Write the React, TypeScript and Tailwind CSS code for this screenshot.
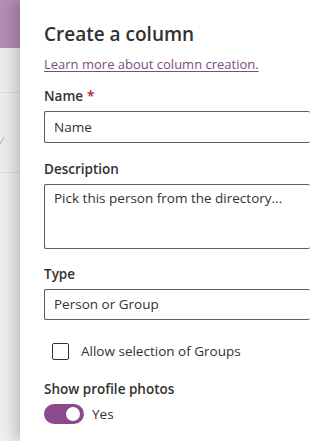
import { useState } from "react";

const font = { fontFamily: '"Open Sans", "Noto Sans", sans-serif' };

function Label({ children, required }: { children: React.ReactNode; required?: boolean }) {
  return (
    <div className="text-[13.5px] font-semibold leading-5 text-[#323130]">
      {children}
      {required && <span className="ml-1 text-[#a4262c]">*</span>}
    </div>
  );
}

export default function App() {
  const [groups, setGroups] = useState(false);
  const [photos, setPhotos] = useState(true);

  return (
    <div className="flex h-[441px] w-[310px] overflow-hidden bg-white" style={font}>
      {/* list behind the panel */}
      <div className="flex w-[20px] shrink-0 flex-col bg-[#ececec]">
        <div className="h-[48px] bg-[#b48cb4]" />
        <div className="h-[45px] border-b border-[#dcdcdc]" />
        <div className="h-[80px] border-b border-[#dcdcdc] pt-[42px] pl-[1px]">
          <span className="block text-[11px] leading-3 text-[#a0a0a0]">⁄</span>
        </div>
        <div className="flex-1 bg-[#eeeeee]" />
      </div>

      {/* side panel */}
      <div className="relative flex-1 pl-[24px] pt-[20px] shadow-[-6px_0_12px_rgba(0,0,0,0.18)]">
        <h1 className="text-[19px] font-semibold leading-7 text-[#323130]">Create a column</h1>
        <a
          href="#"
          className="mt-[6px] block text-[13px] leading-5 text-[#7d4c80] underline underline-offset-2"
        >
          Learn more about column creation.
        </a>

        <div className="mt-[12px]">
          <Label required>Name</Label>
          <div className="mt-[5px] flex h-[32px] items-center rounded-[2px] border border-r-0 border-[#605e5c] pl-[9px] text-[13.5px] text-[#323130]">
            Name
          </div>
        </div>

        <div className="mt-[16px]">
          <Label>Description</Label>
          <div className="mt-[5px] h-[65px] rounded-[2px] border border-r-0 border-[#605e5c] pl-[9px] pt-[3px] text-[13.5px] text-[#323130]">
            Pick this person from the directory...
          </div>
        </div>

        <div className="mt-[15px]">
          <Label>Type</Label>
          <div className="mt-[5px] flex h-[31px] items-center rounded-[2px] border border-r-0 border-[#605e5c] pl-[9px] text-[13.5px] text-[#323130]">
            Person or Group
          </div>
        </div>

        <label className="mt-[21px] flex h-[20px] cursor-pointer items-center gap-[12px] pl-[8px]">
          <span
            onClick={() => setGroups(!groups)}
            className="h-[17px] w-[17px] rounded-[2px] border border-[#323130] bg-white"
          />
          <span className="text-[13.5px] text-[#323130]">Allow selection of Groups</span>
        </label>

        <div className="mt-[18px]">
          <Label>Show profile photos</Label>
          <div className="mt-[5px] flex items-center gap-[8px]">
            <button
              type="button"
              onClick={() => setPhotos(!photos)}
              className={`flex h-[20px] w-[40px] items-center rounded-full px-[4px] ${
                photos ? "justify-end bg-[#8b4a8c]" : "justify-start border border-[#323130] bg-white"
              }`}
            >
              <span className={`h-[14px] w-[14px] rounded-full ${photos ? "bg-white" : "bg-[#323130]"}`} />
            </button>
            <span className="text-[13.5px] text-[#323130]">{photos ? "Yes" : "No"}</span>
          </div>
        </div>
      </div>
    </div>
  );
}
